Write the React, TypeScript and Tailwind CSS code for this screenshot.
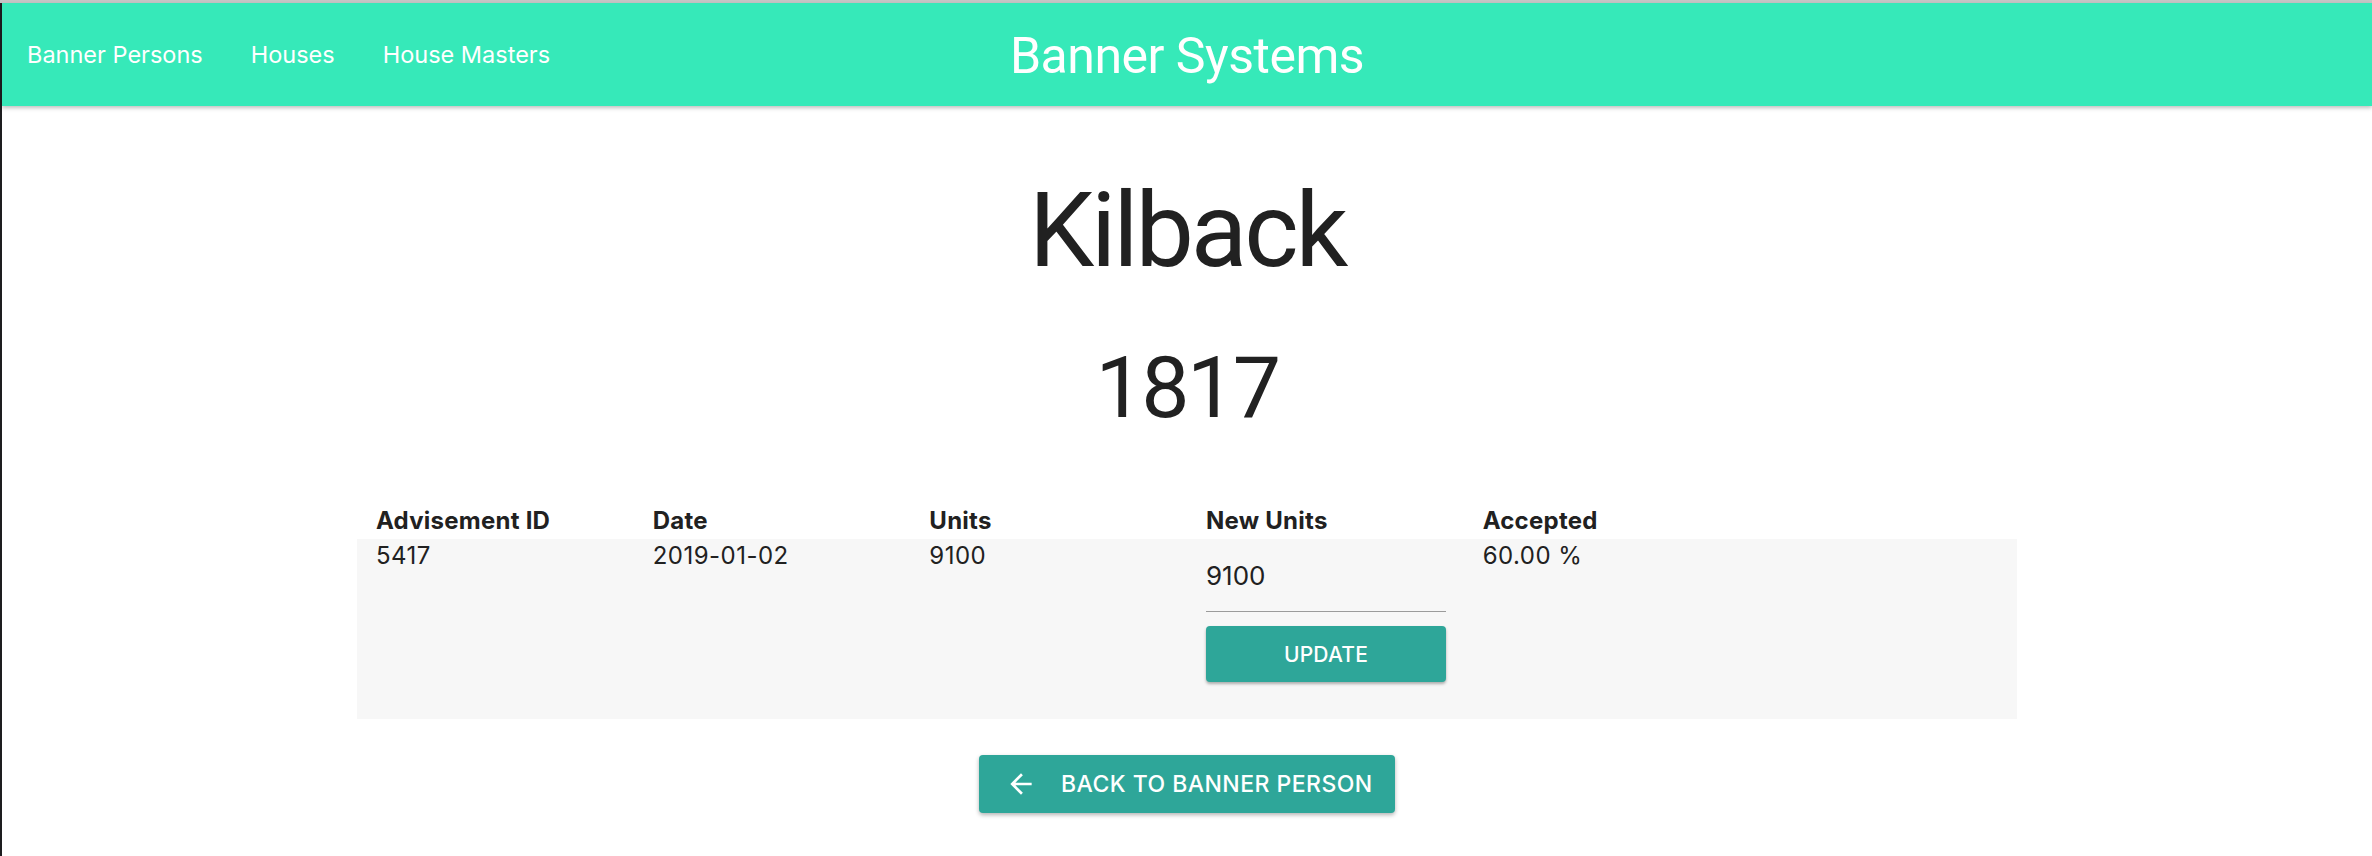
import React from 'react';

const navLinks = ['Banner Persons', 'Houses', 'House Masters'];
const columns = ['Advisement ID', 'Date', 'Units', 'New Units', 'Accepted', ''];

function ArrowBack() {
  return (
    <svg viewBox="0 0 24 24" className="w-[32px] h-[32px] fill-white shrink-0">
      <path d="M20 11H7.83l5.59-5.59L12 4l-8 8 8 8 1.41-1.41L7.83 13H20v-2z" />
    </svg>
  );
}

export default function App() {
  return (
    <div className="min-h-[856px] bg-white flex flex-col font-['Inter',sans-serif] text-[#212121]">
      {/* window chrome line */}
      <div className="h-[3px] bg-[#c6c6c6] shrink-0" />
      <div className="flex flex-1">
        <div className="w-[2px] bg-[#1d1d1f] shrink-0" />
        <div className="flex-1 flex flex-col">
          {/* App bar */}
          <header className="relative h-[103px] bg-[#36e9b9] shadow-[0_2px_4px_rgba(0,0,0,0.25)] flex items-center px-[25px] z-10">
            <nav className="flex items-center gap-[48px] text-[23.5px] leading-none text-white">
              {navLinks.map((l) => (
                <span key={l}>{l}</span>
              ))}
            </nav>
            <h1 className="absolute left-0 right-0 text-center pointer-events-none font-['Roboto',sans-serif] text-[50px] leading-none text-white tracking-[-0.01em] pt-[2px]">
              Banner Systems
            </h1>
          </header>

          <main className="flex flex-col items-center">
            <h2 className="mt-[73px] font-['Roboto',sans-serif] text-[104px] leading-none tracking-[-0.03em]">Kilback</h2>
            <h3 className="mt-[62px] font-['Roboto',sans-serif] text-[86px] leading-none tracking-[-0.03em]">1817</h3>

            {/* Advisements table */}
            <div className="mt-[78px] w-[1660px]">
              <div className="grid grid-cols-6 h-[30px]">
                {columns.map((c, i) => (
                  <div key={i} className="pl-[19px] text-[24px] font-bold leading-none tracking-[0.01em]">
                    {c}
                  </div>
                ))}
              </div>
              <div className="grid grid-cols-6 h-[180px] bg-[#f7f7f7] text-[24px] leading-none tracking-[0.02em]">
                <div className="pl-[19px] pt-[5px]">5417</div>
                <div className="pl-[19px] pt-[5px]">2019-01-02</div>
                <div className="pl-[19px] pt-[5px]">9100</div>
                <div className="pl-[19px] pt-[24px]">
                  <div className="w-[240px]">
                    <div className="text-[26px] leading-none tracking-normal border-b border-[#9b9b9b] pb-[22px]">9100</div>
                    <button className="mt-[14px] w-[240px] h-[56px] rounded-[4px] bg-[#2ea699] text-white text-[21px] font-medium tracking-[0.01em] shadow-[0_2px_3px_rgba(0,0,0,0.3)]">
                      UPDATE
                    </button>
                  </div>
                </div>
                <div className="pl-[19px] pt-[5px]">60.00 %</div>
                <div />
              </div>
            </div>

            <button className="mt-[36px] h-[58px] w-[416px] rounded-[4px] bg-[#2ea699] text-white flex items-center pl-[26px] gap-[24px] text-[23px] font-medium tracking-[0.02em] shadow-[0_2px_4px_rgba(0,0,0,0.3)]">
              <ArrowBack />
              <span>BACK TO BANNER PERSON</span>
            </button>
          </main>
        </div>
      </div>
    </div>
  );
}
